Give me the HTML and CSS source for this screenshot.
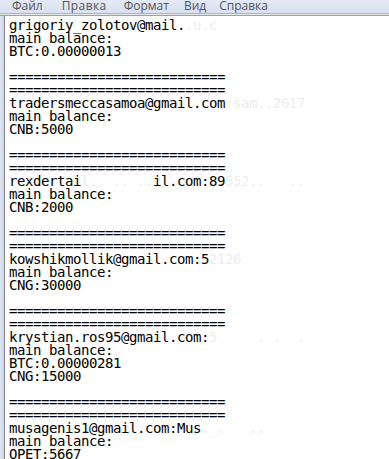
FILE: index.html
```html
<!DOCTYPE html>
<html>
<head>
<meta charset="utf-8">
<link rel="stylesheet" href="styles.css">
</head>
<body>
<div class="window">
  <div class="menubar">
    <span class="menu m1">Файл</span>
    <span class="menu m2">Правка</span>
    <span class="menu m3">Формат</span>
    <span class="menu m4">Вид</span>
    <span class="menu m5">Справка</span>
  </div>
  <div class="sep"></div>
  <div class="editor">
    <div class="gutter"></div>
    <pre class="text">grigoriy_zolotov@mail.<span class="faint">.u.c</span>
main balance:
BTC:0.00000013

===========================
===========================
tradersmeccasamoa@gmail.com<span class="faint">:sam..2017</span>
main balance:
CNB:5000

===========================
===========================
rexdertai<span class="faint">l.. .. ..</span>il.com:89<span class="faint">552..   ..</span>
main balance:
CNB:2000

===========================
===========================
kowshikmollik@gmail.com:5<span class="faint">2126</span>
main balance:
CNG:30000

===========================
===========================
krystian.ros95@gmail.com:<span class="faint">5     . .  .</span>
main balance:
BTC:0.00000281
CNG:15000

===========================
===========================
musagenis1@gmail.com:Mus<span class="faint">._.   ..</span>
main balance:
OPET:5667</pre>
  </div>
</div>
</body>
</html>
```

FILE: styles.css
```css
html, body {
  margin: 0;
  padding: 0;
  background: #ffffff;
}

.window {
  width: 389px;
  height: 459px;
  display: flex;
  flex-direction: column;
  overflow: hidden;
}

.menubar {
  height: 13px;
  flex: none;
  display: flex;
  align-items: flex-start;
  padding-left: 12px;
  background: linear-gradient(#e4eaf5, #d8e1f2);
  overflow: hidden;
}

.menu {
  font-family: "Open Sans", "Noto Sans", sans-serif;
  font-size: 12px;
  line-height: 13px;
  color: #555555;
  position: relative;
  top: -1px;
}

.m1 {
  margin-right: 19px;
}

.m2 {
  margin-right: 17px;
  letter-spacing: 0.4px;
}

.m3 {
  margin-right: 15px;
}

.m4 {
  margin-right: 13px;
}

.sep {
  height: 3px;
  flex: none;
  border-top: 1px solid #b4b4b4;
  border-bottom: 1px solid #a0a0a0;
  background: #e8e8e8;
  box-sizing: border-box;
}

.editor {
  flex: 1;
  display: flex;
}

.gutter {
  width: 4px;
  flex: none;
  background: linear-gradient(90deg, #dfe7f3, #c9d5e8);
  border-right: 1px solid #8a8a8a;
}

.text {
  margin: 0;
  padding: 3px 0 0 4px;
  font-family: "DejaVu Sans Mono", "Liberation Mono", monospace;
  font-size: 14px;
  letter-spacing: -0.43px;
  line-height: 13px;
  color: #000000;
  white-space: pre;
}

.faint {
  color: #ededed;
}
```
